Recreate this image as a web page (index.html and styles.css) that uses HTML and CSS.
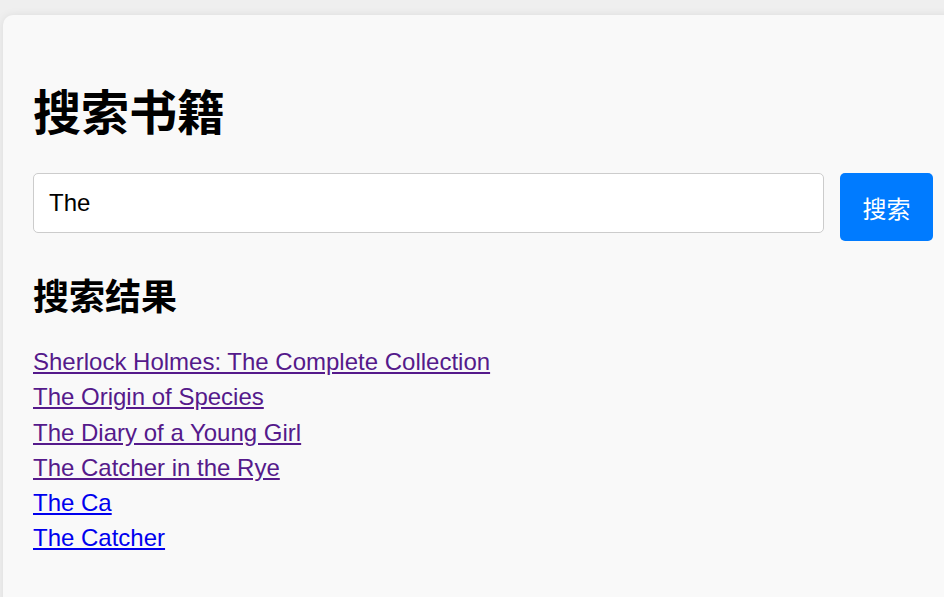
FILE: index.html
```html
<!DOCTYPE html>
<html lang="zh">
<head>
<meta charset="utf-8">
<link rel="stylesheet" href="styles.css">
</head>
<body>
<div class="card">
  <h1 class="title">搜索书籍</h1>
  <div class="search-row">
    <div class="search-input">The</div>
    <button class="search-btn">搜索</button>
  </div>
  <h2 class="subtitle">搜索结果</h2>
  <ul class="results">
    <li><a class="visited" href="#">Sherlock Holmes: The Complete Collection</a></li>
    <li><a class="visited" href="#">The Origin of Species</a></li>
    <li><a class="visited" href="#">The Diary of a Young Girl</a></li>
    <li><a class="visited" href="#">The Catcher in the Rye</a></li>
    <li><a class="link" href="#">The Ca</a></li>
    <li><a class="link" href="#">The Catcher</a></li>
  </ul>
</div>
</body>
</html>
```
FILE: styles.css
```css
html, body {
  margin: 0;
  padding: 0;
  background: #efefef;
  overflow: hidden;
  font-family: "Liberation Sans", Arial, "Noto Sans CJK SC", sans-serif;
}
body {
  padding: 15px 0 0 3px;
  height: 597px;
  box-sizing: border-box;
}
.card {
  width: 1000px;
  height: 700px;
  background: #f9f9f9;
  border-radius: 10px;
  box-shadow: 0 0 8px rgba(0,0,0,0.08);
  padding: 54px 30px 0 30px;
  box-sizing: border-box;
}
.title {
  margin: 0;
  font-size: 48px;
  line-height: 80px;
  font-weight: bold;
  color: #000;
  font-family: "Noto Sans CJK SC", sans-serif;
}
.search-row {
  display: flex;
  align-items: flex-start;
  gap: 16px;
  margin-top: 24px;
}
.search-input {
  width: 791px;
  height: 60px;
  box-sizing: border-box;
  border: 1px solid #ccc;
  border-radius: 5px;
  background: #fff;
  padding: 0 15px;
  display: flex;
  align-items: center;
  font-size: 24px;
  color: #000;
}
.search-btn {
  width: 93px;
  height: 68px;
  border: none;
  border-radius: 5px;
  background: #007bff;
  color: #fff;
  font-size: 24px;
  font-family: "Noto Sans CJK SC", sans-serif;
  padding: 0;
}
.subtitle {
  margin: 25px 0 0 0;
  font-size: 36px;
  line-height: 56px;
  font-weight: bold;
  color: #000;
  font-family: "Noto Sans CJK SC", sans-serif;
}
.results {
  list-style: none;
  margin: 22px 0 0 0;
  padding: 0;
}
.results li {
  font-size: 24px;
  line-height: 35.3px;
}
.visited { color: #551a8b; }
.link { color: #0000ee; }
```
